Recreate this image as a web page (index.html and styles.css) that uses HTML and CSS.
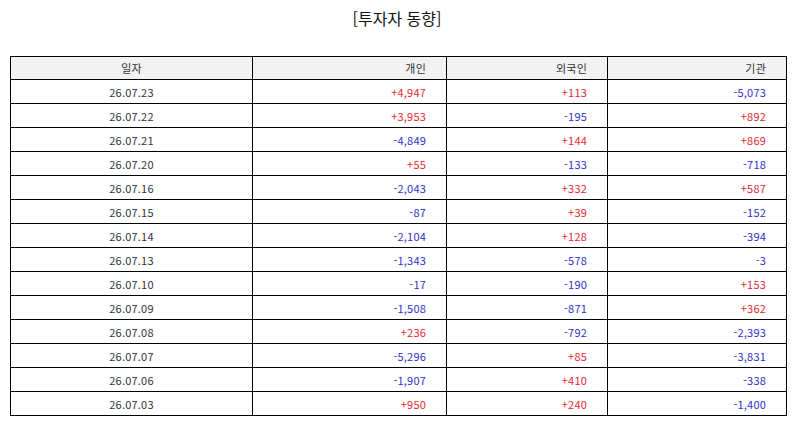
FILE: index.html
```html
<!DOCTYPE html>
<html lang="ko">
<head>
<meta charset="utf-8">
<title>투자자 동향</title>
<link rel="stylesheet" href="styles.css">
</head>
<body>
<div class="page">
  <h1 class="title">[투자자 동향]</h1>
  <table class="trend">
    <colgroup>
      <col class="c-date">
      <col class="c-ind">
      <col class="c-for">
      <col class="c-inst">
    </colgroup>
    <thead>
      <tr><th class="center">일자</th><th>개인</th><th>외국인</th><th>기관</th></tr>
    </thead>
    <tbody>
      <tr><td class="center">26.07.23</td><td class="up">+4,947</td><td class="up">+113</td><td class="down">-5,073</td></tr>
      <tr><td class="center">26.07.22</td><td class="up">+3,953</td><td class="down">-195</td><td class="up">+892</td></tr>
      <tr><td class="center">26.07.21</td><td class="down">-4,849</td><td class="up">+144</td><td class="up">+869</td></tr>
      <tr><td class="center">26.07.20</td><td class="up">+55</td><td class="down">-133</td><td class="down">-718</td></tr>
      <tr><td class="center">26.07.16</td><td class="down">-2,043</td><td class="up">+332</td><td class="up">+587</td></tr>
      <tr><td class="center">26.07.15</td><td class="down">-87</td><td class="up">+39</td><td class="down">-152</td></tr>
      <tr><td class="center">26.07.14</td><td class="down">-2,104</td><td class="up">+128</td><td class="down">-394</td></tr>
      <tr><td class="center">26.07.13</td><td class="down">-1,343</td><td class="down">-578</td><td class="down">-3</td></tr>
      <tr><td class="center">26.07.10</td><td class="down">-17</td><td class="down">-190</td><td class="up">+153</td></tr>
      <tr><td class="center">26.07.09</td><td class="down">-1,508</td><td class="down">-871</td><td class="up">+362</td></tr>
      <tr><td class="center">26.07.08</td><td class="up">+236</td><td class="down">-792</td><td class="down">-2,393</td></tr>
      <tr><td class="center">26.07.07</td><td class="down">-5,296</td><td class="up">+85</td><td class="down">-3,831</td></tr>
      <tr><td class="center">26.07.06</td><td class="down">-1,907</td><td class="up">+410</td><td class="down">-338</td></tr>
      <tr><td class="center">26.07.03</td><td class="up">+950</td><td class="up">+240</td><td class="down">-1,400</td></tr>
    </tbody>
  </table>
</div>
</body>
</html>
```

FILE: styles.css
```css
html, body {
  margin: 0;
  padding: 0;
  background: #ffffff;
}

.page {
  width: 794px;
  padding: 0 0 0 10px;
  box-sizing: border-box;
  font-family: "Noto Sans CJK KR", "Noto Sans", sans-serif;
  color: #333333;
}

.title {
  margin: 0 0 0 -10px;
  height: 56px;
  padding-top: 6px;
  box-sizing: border-box;
  text-align: center;
  font-size: 16px;
  font-weight: normal;
  line-height: 24px;
  color: #111111;
}

.trend {
  border-collapse: collapse;
  table-layout: fixed;
  width: 776px;
  font-size: 11px;
  letter-spacing: 0.2px;
}

.c-date { width: 242px; }
.c-ind { width: 194px; }
.c-for { width: 161px; }
.c-inst { width: 179px; }

.trend th,
.trend td {
  border: 1px solid #000000;
  height: 24px;
  padding: 0 20px 0 0;
  box-sizing: border-box;
  text-align: right;
  line-height: 14px;
  font-weight: normal;
  color: #333333;
}

.trend th {
  height: 23px;
  background: #f2f2f2;
}

.trend th.center,
.trend td.center {
  text-align: center;
  padding: 0;
}

.trend td.up { color: #e8282d; }
.trend td.down { color: #2f2fd0; }
```
